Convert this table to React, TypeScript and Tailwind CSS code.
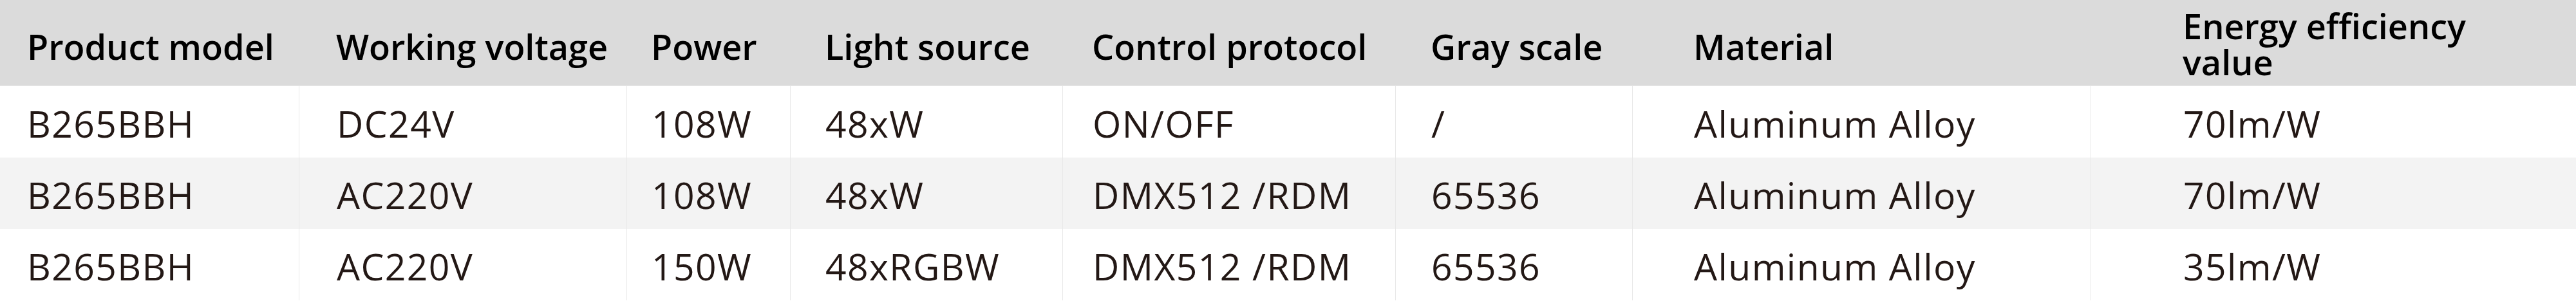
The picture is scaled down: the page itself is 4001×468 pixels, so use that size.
const headers = [
  "Product model",
  "Working voltage",
  "Power",
  "Light source",
  "Control protocol",
  "Gray scale",
  "Material",
];

const rows = [
  ["B265BBH", "DC24V", "108W", "48xW", "ON/OFF", "/", "Aluminum Alloy", "70lm/W"],
  ["B265BBH", "AC220V", "108W", "48xW", "DMX512 /RDM", "65536", "Aluminum Alloy", "70lm/W"],
  ["B265BBH", "AC220V", "150W", "48xRGBW", "DMX512 /RDM", "65536", "Aluminum Alloy", "35lm/W"],
];

// left padding of each column, the source table is not very regular
const pads = ["pl-[42px]", "pl-[58px]", "pl-[38px]", "pl-[54px]", "pl-[46px]", "pl-[55px]", "pl-[95px]", "pl-[143px]"];

const cols = "grid grid-cols-[464px_509px_254px_423px_517px_368px_712px_1fr]";

export default function App() {
  return (
    <div className="w-[4001px] h-[468px] bg-white font-['Open_Sans',sans-serif] overflow-hidden">
      {/* HEADER */}
      <div className={`${cols} h-[134px] bg-[#dbdbdb] border-b border-[#ebebeb] text-[54px] font-semibold text-black leading-[56px]`}>
        {headers.map((h, i) => (
          <div key={h} className={`flex items-center pt-[10px] ${pads[i]}`}>
            {h}
          </div>
        ))}
        <div className={`flex items-center pt-[3px] ${pads[7]}`}>
          <span>
            Energy efficiency
            <br />
            value
          </span>
        </div>
      </div>
      {/* LINHAS */}
      {rows.map((r, ri) => (
        <div
          key={ri}
          className={`${cols} h-[111px] text-[57px] tracking-[0.025em] text-[#231815] leading-none ${ri === 1 ? "bg-[#f3f3f3]" : "bg-white"}`}
        >
          {r.map((c, ci) => (
            <div key={ci} className={`flex items-center pt-[6px] ${ci > 0 ? "border-l border-[#e8e8e8]" : ""} ${pads[ci]}`}>
              {c}
            </div>
          ))}
        </div>
      ))}
    </div>
  );
}
